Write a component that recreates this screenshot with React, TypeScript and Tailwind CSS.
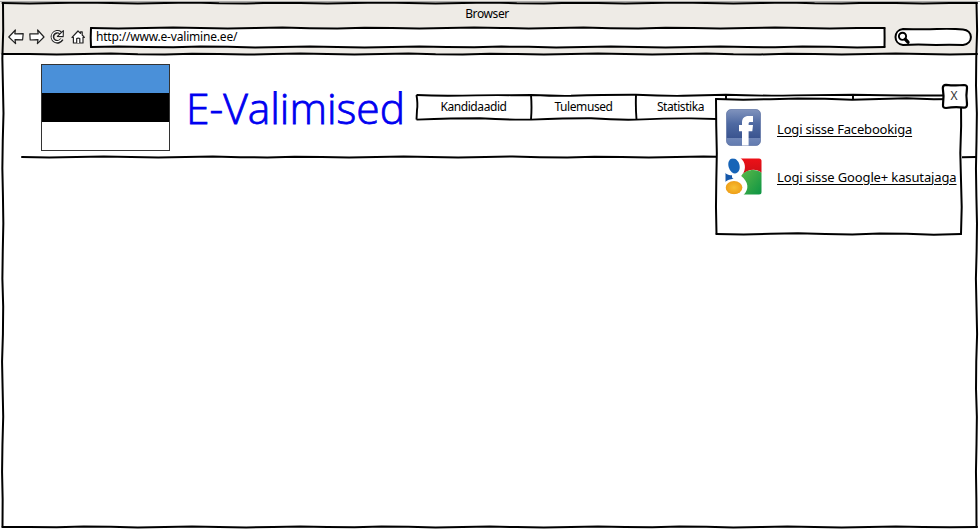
import type { ReactNode } from "react";

const WAVES = [0, 0.45, 0.1, -0.4, -0.1, 0.5, 0, -0.5, 0.2, 0.4, -0.3];

type Point = [number, number];

// Joins two points with a slightly uneven pen stroke.
function stroke([x1, y1]: Point, [x2, y2]: Point, amp = 1, seed = 0) {
  const length = Math.hypot(x2 - x1, y2 - y1);
  const steps = Math.max(2, Math.round(length / 27));
  const nx = -(y2 - y1) / length;
  const ny = (x2 - x1) / length;
  let d = `M${x1} ${y1}`;
  for (let i = 1; i <= steps; i++) {
    const t = i / steps;
    const off = i === steps ? 0 : WAVES[(i + seed) % WAVES.length] * amp;
    d += `L${(x1 + (x2 - x1) * t + nx * off).toFixed(2)} ${(y1 + (y2 - y1) * t + ny * off).toFixed(2)}`;
  }
  return d;
}

function Ink({ lines, amp = 1, width = 2 }: { lines: [Point, Point][]; amp?: number; width?: number }) {
  return (
    <svg className="pointer-events-none absolute inset-0 h-full w-full overflow-visible" fill="none" stroke="#000" strokeWidth={width} strokeLinecap="round" strokeLinejoin="round">
      {lines.map(([a, b], i) => (
        <path key={i} d={stroke(a, b, amp, i * 3)} />
      ))}
    </svg>
  );
}

function BackIcon() {
  return (
    <svg className="h-4 w-4" viewBox="0 0 16 16" fill="#fff" stroke="#222" strokeWidth="1.2" strokeLinejoin="round">
      <path d="M.8 8 7.4 1 6.8 4.8 15.2 4.6 14.6 10.8 7 10.6 7.6 14.600Z" />
    </svg>
  );
}

function ForwardIcon() {
  return (
    <svg className="h-4 w-4" viewBox="0 0 16 16" fill="#fff" stroke="#222" strokeWidth="1.2" strokeLinejoin="round">
      <path d="M15 8 8.600 1 9.200 4.800.800 4.800 1.200 11 9 10.600 8.400 14.600Z" />
    </svg>
  );
}

function ReloadIcon() {
  return (
    <svg className="h-4 w-4" viewBox="0 0 16 16" fill="none" stroke="#222" strokeLinejoin="round">
      <path d="M10.6 3.9A5 5 0 1 0 11.9 10.2" strokeWidth="3.600" />
      <path d="M10.5 4A5 5 0 1 0 11.6 9.9" stroke="#fff" strokeWidth="1.3" />
      <path d="M13.400 1.600 13.200 7.600 7.400 7.400Z" fill="#fff" strokeWidth="1.1" />
    </svg>
  );
}

function HomeIcon() {
  return (
    <svg className="h-4 w-4" viewBox="0 0 16 16" fill="#fff" stroke="#222" strokeWidth="1.2" strokeLinejoin="round">
      <path d="M1 8.4 7 2 9.5 4.4V2.8H11.2V6L13.4 8.4H12V14H2.4V8.4Z" />
      <path d="M5.7 14V9.5Q7.2 8.6 8.8 9.5V14" />
    </svg>
  );
}

function FacebookIcon() {
  return (
    <svg className="h-[37px] w-[35px]" viewBox="0 0 35 37">
      <defs>
        <linearGradient id="fb" x1="0" x2="0" y1="0" y2="1">
          <stop offset="0" stopColor="#8093bd" />
          <stop offset=".4" stopColor="#4e69a2" />
          <stop offset=".78" stopColor="#3b5590" />
          <stop offset=".8" stopColor="#6f86b7" />
          <stop offset="1" stopColor="#627bb0" />
        </linearGradient>
      </defs>
      <rect x=".5" y=".5" width="34" height="36" rx="4.5" fill="url(#fb)" stroke="#5a70a2" strokeWidth=".7" />
      <path d="M16 36.5V22.200H13V16H16V13.7C16 9.200 18.300 7 22.6 7H27V13H24.600C23.100 13 22.600 13.600 22.600 15V16H27L26.3 22.200H22.600V36.5Z" fill="#fff" />
    </svg>
  );
}

function GoogleIcon() {
  return (
    <svg className="h-[37px] w-[37px]" viewBox="0 0 37 37">
      <defs>
        <linearGradient id="gg" x1="0" x2="1" y1="0" y2="1">
          <stop offset="0" stopColor="#5cb848" />
          <stop offset="1" stopColor="#0a9444" />
        </linearGradient>
        <linearGradient id="gr" x1="0" x2="0" y1="0" y2="1">
          <stop offset="0" stopColor="#ee1118" />
          <stop offset="1" stopColor="#cc1016" />
        </linearGradient>
        <radialGradient id="gy">
          <stop offset="0" stopColor="#f8bf34" />
          <stop offset="1" stopColor="#ee9f19" />
        </radialGradient>
        <clipPath id="gc">
          <rect x=".5" y=".5" width="36" height="36" rx="2.5" />
        </clipPath>
      </defs>
      <g clipPath="url(#gc)">
        <path d="M15.500 0H37V15C30 9.500 23 12 17.500 16.200C21.500 11 20.500 4 15.500 0Z" fill="url(#gr)" />
        <path d="M16.200 18C20 11.500 31 10 37 15V37H18.500C24.500 31 23.500 24 16.200 18Z" fill="url(#gg)" />
        <path d="M0 14.800C2 17 4.500 17.300 7 17.300Q6.600 20.400 8.800 20.800C5 21.400 2.500 22 0 24Z" fill="#1557a9" />
        <ellipse cx="9" cy="7.800" rx="5.500" ry="7.800" fill="#1764b7" transform="rotate(-16 9 7.8)" />
        <ellipse cx="9" cy="29.600" rx="8.400" ry="6.600" fill="url(#gy)" />
      </g>
    </svg>
  );
}

function SearchBox() {
  return (
    <div className="ml-[9px] h-[18px] w-[78px]">
      <svg className="h-full w-full" viewBox="0 0 78 18" fill="#fff" stroke="#000" strokeWidth="2" strokeLinecap="round" strokeLinejoin="round">
        <path d="M9 1Q30 1.7 43 1Q57 .5 69 1.4C79 2 80 15.5 69 17Q55 16.3 42 17Q23 16.2 9 17C-1 16-1 2 9 1Z" />
        <circle cx="8.5" cy="8.3" r="3.6" strokeWidth="1.9" />
        <path d="M11.2 11.2 14 14.2" strokeWidth="3.3" />
      </svg>
    </div>
  );
}

function BrowserBar() {
  return (
    <header className="h-[54px] w-[977px] shrink-0 bg-[#eeebe6] pt-[3px] pl-[8px]">
      <div className="h-[24px] w-[958px] pt-[2px] text-center text-[12px] leading-[18px] tracking-[-0.4px]">Browser</div>
      <div className="flex h-[20px] items-center">
        <div className="flex w-[82px] gap-[5px]">
          <BackIcon />
          <ForwardIcon />
          <ReloadIcon />
          <HomeIcon />
        </div>
        <div className="relative h-[20px] w-[795px] bg-white pl-[6px] text-[12px] leading-[20px]">
          <span className="tracking-[-0.19px]">http://www.e-valimine.ee/</span>
          <Ink lines={[[[1, 1], [794.5, 1]], [[794.5, 1], [794.5, 20]], [[794.5, 20], [1, 20]], [[1, 20], [1, 1]]]} />
        </div>
        <SearchBox />
      </div>
    </header>
  );
}

function Cell({ width, children }: { width: string; children?: ReactNode }) {
  return <div className={`${width} text-center text-[12px] leading-[24px] tracking-[-0.42px]`}>{children}</div>;
}

function NavMenu() {
  return (
    <nav className="relative mt-[41px] ml-[10px] flex h-[24px] w-[545px]">
      <Cell width="w-[115px]">Kandidaadid</Cell>
      <Cell width="w-[105px]">Tulemused</Cell>
      <Cell width="w-[89px]">Statistika</Cell>
      <svg className="pointer-events-none absolute inset-0 h-full w-full overflow-visible" fill="none" stroke="#000" strokeWidth="1.9" strokeLinejoin="round">
        <path d="M.5 0Q15 .8 32 .8Q75-.2 95 .2L115 0Q138 1 155 .8Q190-.4 220-.3Q245 1 267 .8L310-.2Q345 1 378 .4L437-.2Q485 1 545 .3" />
        <path d="M.5 0Q2 9 1 15L.5 24.6" />
        <path d="M.5 24.6Q37 23.2 64 23.2Q92 25 115 24.6Q152 23.2 175 23.3Q200 25 220 24.6Q254 23.2 275 23.4L310 24.3" />
        <path d="M115 0Q116 12 115 24.5M220 0Q219.5 12 220.5 24.5M310 0V24M437 0V24" />
      </svg>
    </nav>
  );
}

function LoginPopup() {
  return (
    <section className="absolute top-[99px] left-[716px] h-[136px] w-[246px] bg-white">
      <div className="flex flex-col gap-[12px] pt-[10px] pl-[9px] text-[13px] leading-[18px]">
        <div className="flex items-center">
          <div className="w-[52px] pl-[1px]"><FacebookIcon /></div>
          <a className="mt-[2px] whitespace-nowrap tracking-[-0.18px] underline decoration-1 underline-offset-2">Logi sisse Facebookiga</a>
        </div>
        <div className="flex items-center">
          <div className="w-[52px]"><GoogleIcon /></div>
          <a className="whitespace-nowrap tracking-[-0.13px] underline decoration-1 underline-offset-2">Logi sisse Google+ kasutajaga</a>
        </div>
      </div>
      <Ink lines={[[[0, 0], [245, 0]], [[245, 0], [245, 135]], [[245, 135], [0.5, 135]], [[0.5, 135], [0, 0]]]} amp={1.4} />
      <button className="absolute top-[-15px] left-[226px] h-[24px] w-[26px] text-center text-[12px] leading-[24px] text-[#333]">
        <svg className="absolute inset-0 h-full w-full overflow-visible" fill="#fff" stroke="#000" strokeWidth="2.2" strokeLinejoin="round">
          <path d="M4 .8Q13 2 22 1Q25.3 1 25 4Q23.8 11 25 20Q25.2 23.6 22 23.6Q13 22.4 4 24Q.6 24 1 21Q2.2 12 .8 4Q.8 1 4 .8Z" />
        </svg>
        <span className="relative -left-[1px]">X</span>
      </button>
    </section>
  );
}

export default function App() {
  return (
    <div className="relative flex h-[529px] w-[980px] flex-col overflow-hidden bg-white font-['Noto_Sans','Open_Sans',sans-serif] text-black">
      <BrowserBar />
      <main className="relative flex h-[475px] w-[980px]">
        <div className="mt-[10px] ml-[41px] flex h-[87px] w-[129px] flex-col border border-[#333]">
          <div className="h-[28px] bg-[#4a90d9]" />
          <div className="h-[29px] bg-black" />
          <div className="h-[28px] bg-white" />
        </div>
        <h1 className="mt-[24px] ml-[16px] w-[220px] font-['Open_Sans','Noto_Sans',sans-serif] text-[42.5px] leading-[60px] font-light whitespace-nowrap text-[#0000f0] [-webkit-text-stroke:0.8px_#0000f0]">E-Valimised</h1>
        <NavMenu />
        <Ink lines={[[[22, 103], [976, 103]]]} amp={1.1} />
      </main>
      <Ink lines={[[[2.5, 3], [977, 3]], [[2.5, 54], [977, 54]], [[976.5, 3], [976.5, 527]], [[977, 527], [2.5, 527]], [[2.5, 527], [3, 3]]]} amp={1.2} />
      <div className="absolute top-px left-0 h-px w-full bg-[#aaa]" />
      <LoginPopup />
    </div>
  );
}
